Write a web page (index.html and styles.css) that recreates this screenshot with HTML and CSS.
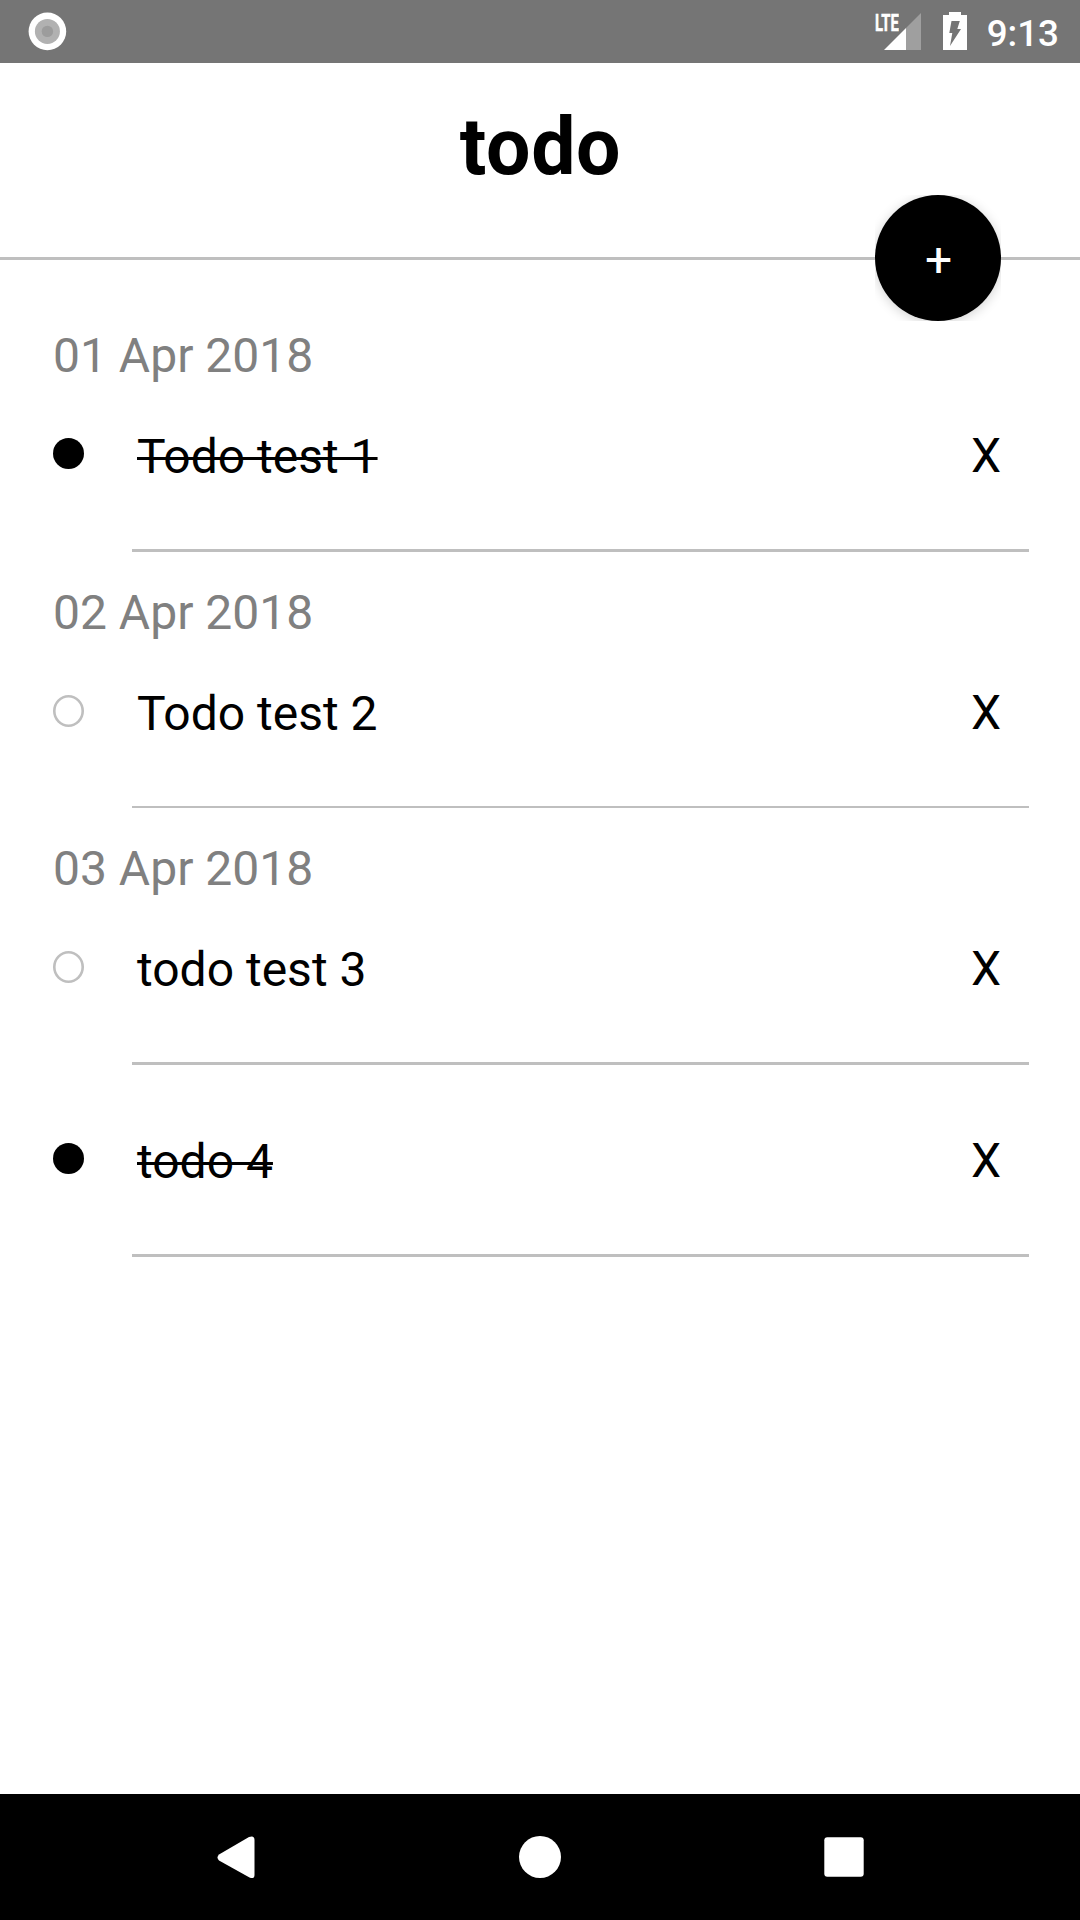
FILE: index.html
```html
<!DOCTYPE html>
<html lang="en">
<head>
<meta charset="utf-8">
<title>todo</title>
<link rel="stylesheet" href="styles.css">
</head>
<body>
<div class="screen">
  <div class="status-bar">
    <svg class="status-record" width="39" height="39" viewBox="0 0 39 39">
      <circle cx="19.400" cy="19.400" r="18.800" fill="#fff"/>
      <circle cx="19.400" cy="19.400" r="12.500" fill="#b1b1b1"/>
      <circle cx="19.400" cy="19.400" r="5.700" fill="#9c9c9c"/>
    </svg>
    <div class="status-icons">
      <div class="signal">
        <svg width="47" height="38" viewBox="0 0 47 38">
          <path d="M46 1V38H31V16Z" fill="#9f9f9f"/>
          <path d="M9 38L31 16V38Z" fill="#fff"/>
        </svg>
        <span class="signal-type">LTE</span>
      </div>
      <svg class="battery" width="24" height="38" viewBox="0 0 24 38">
        <path fill="#fff" fill-rule="evenodd" d="M6 0H18V3H24V38H0V3H6ZM8.500 9H16.800L14.300 17H18L7 34L9.300 21H6.300Z"/>
      </svg>
      <span class="clock">9:13</span>
    </div>
  </div>

  <header class="header">
    <h1 class="title">todo</h1>
    <button class="add"><span class="add-label">+</span></button>
  </header>

  <main class="list">
    <h2 class="date">01 Apr 2018</h2>
    <div class="item item-done">
      <span class="check"></span><span class="text">Todo test 1</span><span class="remove">X</span>
    </div>
    <h2 class="date">02 Apr 2018</h2>
    <div class="item item-thin">
      <span class="check"></span><span class="text">Todo test 2</span><span class="remove">X</span>
    </div>
    <h2 class="date">03 Apr 2018</h2>
    <div class="item">
      <span class="check"></span><span class="text">todo test 3</span><span class="remove">X</span>
    </div>
    <div class="item item-done item-next">
      <span class="check"></span><span class="text">todo 4</span><span class="remove">X</span>
    </div>
  </main>

  <nav class="nav-bar">
    <svg width="38" height="43" viewBox="0 0 38 43"><path d="M2 18.500L32 1Q37.500-1 37.500 4V39Q37.500 43.500 32.500 41.500L2 24.500Q-1 21.500 2 18.500Z" fill="#fff"/></svg>
    <svg width="42" height="42" viewBox="0 0 42 42"><circle cx="21" cy="21" r="21" fill="#fff"/></svg>
    <svg width="40" height="40" viewBox="0 0 40 40"><rect x=".3" y=".3" width="39.400" height="39.400" rx="3" fill="#fff"/></svg>
  </nav>
</div>
</body>
</html>
```
FILE: styles.css
```css
* { box-sizing: border-box; }

body {
  margin: 0;
  background: #fff;
  color: #000;
  font-family: Roboto, sans-serif;
}

.screen {
  display: flex;
  flex-direction: column;
  width: 1080px;
  height: 1920px;
  overflow: hidden;
}

.status-bar {
  display: flex;
  justify-content: space-between;
  align-items: flex-start;
  height: 63px;
  padding: 12px 21px 0 28px;
  background: #757575;
  color: #fff;
}

.status-icons { display: flex; align-items: flex-start; }

.signal {
  position: relative;
  width: 47px;
  height: 38px;
  margin-right: 21px;
}

.signal-type {
  position: absolute;
  left: 0;
  top: 1px;
  font-size: 23.500px;
  font-weight: 700;
  line-height: 20px;
  -webkit-text-stroke: .5px #fff;
  transform: scaleX(.63);
  transform-origin: 0 0;
}

.battery { margin-right: 20px; }

.clock {
  padding-top: 1px;
  font-size: 36.750px;
  font-weight: 500;
  line-height: 42px;
}

.header {
  position: relative;
  display: flex;
  justify-content: center;
  height: 197px;
  padding-top: 38px;
  border-bottom: 3px solid #bfbfbf;
}

.title {
  margin: 0 0 0 1px;
  font-size: 78.750px;
  font-weight: 700;
  line-height: 92px;
  letter-spacing: .6px;
}

.add {
  position: absolute;
  right: 79px;
  bottom: -64px;
  display: flex;
  justify-content: center;
  width: 126px;
  height: 126px;
  padding: 0;
  border: 0;
  background: none;
  color: #fff;
  font: 400 48px/130px Roboto, sans-serif;
  overflow: hidden;
}

.add-label {
  width: 126px;
  height: 126px;
  padding-left: 1px;
  border-radius: 50%;
  background: #000;
  box-shadow: 0 2px 12px rgba(0, 0, 0, .18);
}

.list { flex: 1; padding: 35px 51px 0 53px; }

.date {
  height: 85px;
  margin: 0;
  padding-top: 32px;
  font-size: 48px;
  font-weight: 400;
  line-height: 57px;
  color: #808080;
}

.item {
  display: grid;
  grid-template-columns: 79px 1fr 58px;
  align-items: start;
  height: 172px;
  padding-top: 58px;
  font-size: 48px;
  line-height: 57px;
  background: linear-gradient(#bfbfbf, #bfbfbf) 79px 100% / 897px 3px no-repeat;
}

.item-thin { height: 171px; background-size: 897px 2px; }
.item-next { height: 192px; padding-top: 78px; }

.check {
  width: 31px;
  height: 32px;
  border-radius: 50%;
  box-shadow: inset 0 0 0 2.600px #bfbfbf;
}

.item-done .check { height: 31px; background: #000; box-shadow: none; }

.text { margin: -10px 0 0 5px; justify-self: start; }
.item-done .text { text-decoration: line-through; text-decoration-thickness: 3px; }
.remove { margin-top: -11px; }

.nav-bar {
  display: grid;
  grid-template-columns: 302px 305px 40px;
  align-items: center;
  height: 126px;
  padding-left: 217px;
  background: #000;
}
```
